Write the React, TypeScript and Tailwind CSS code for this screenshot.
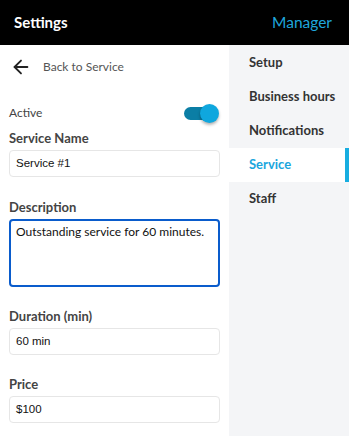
import { ArrowLeft } from "lucide-react";

const menu = ["Setup", "Business hours", "Notifications", "Service", "Staff"];

const Label = ({ children }: { children: string }) => (
  <div className="h-4 text-[13px] font-bold leading-4 text-[#444]">{children}</div>
);

const Field = ({ label, value }: { label: string; value: string }) => (
  <div>
    <Label>{label}</Label>
    <div className="mt-1 flex h-[27px] items-center rounded-[4px] border border-[#e6e6e6] px-[6px] font-['Liberation_Sans',Arial,sans-serif] text-[11.5px] text-[#111]">
      {value}
    </div>
  </div>
);

export default function App() {
  return (
    <div className="h-[436px] w-[349px] overflow-hidden bg-white font-['Lato',sans-serif]">
      {/* header */}
      <div className="flex h-[45px] items-center justify-between bg-black pl-[14px] pr-[17px]">
        <span className="text-[15px] font-bold text-white">Settings</span>
        <span className="text-[15.5px] text-[#1fa6dc]">Manager</span>
      </div>

      <div className="flex h-[391px]">
        {/* left form */}
        <div className="w-[229px] px-[9px]">
          <div className="flex h-[44px] items-center">
            <ArrowLeft size={22} strokeWidth={2} className="ml-px text-[#222]" />
            <span className="ml-[11px] text-[12px] text-[#555]">Back to Service</span>
          </div>

          <div className="mt-[14px] flex h-5 items-center justify-between">
            <span className="text-[12px] text-[#444]">Active</span>
            <div className="relative mr-px h-[19px] w-[35px]">
              <div className="absolute left-0 top-[3px] h-[13px] w-[26px] rounded-full bg-[#0b7ea5]" />
              <div className="absolute right-0 top-0 h-[19px] w-[19px] rounded-full bg-[#0fa7de] shadow-[0_2px_3px_rgba(0,0,0,0.3)]" />
            </div>
          </div>

          <div className="mt-[7px]">
            <Field label="Service Name" value="Service #1" />
          </div>

          <div className="mt-[22px]">
            <Label>Description</Label>
            <div className="mt-1 h-[68px] rounded-[4px] border-2 border-[#0a5ccc] px-[5px] pt-[3px] text-[12px] leading-4 text-[#111]">
              Outstanding service for 60 minutes.
            </div>
          </div>

          <div className="mt-[21px]">
            <Field label="Duration (min)" value="60 min" />
          </div>

          <div className="mt-[21px]">
            <Field label="Price" value="$100" />
          </div>
        </div>

        {/* sidebar */}
        <div className="flex-1 bg-[#f4f5f7] pt-px">
          {menu.map((item) => {
            const active = item === "Service";
            return (
              <div
                key={item}
                className={
                  active
                    ? "flex h-[34px] items-center justify-between bg-white pl-5 text-[13px] font-bold text-[#1aa6dd]"
                    : "flex h-[34px] items-center justify-between pl-5 text-[13px] font-bold text-[#333]"
                }
              >
                <span>{item}</span>
                {active && <span className="h-full w-[4px] bg-[#17ade0]" />}
              </div>
            );
          })}
        </div>
      </div>
    </div>
  );
}
